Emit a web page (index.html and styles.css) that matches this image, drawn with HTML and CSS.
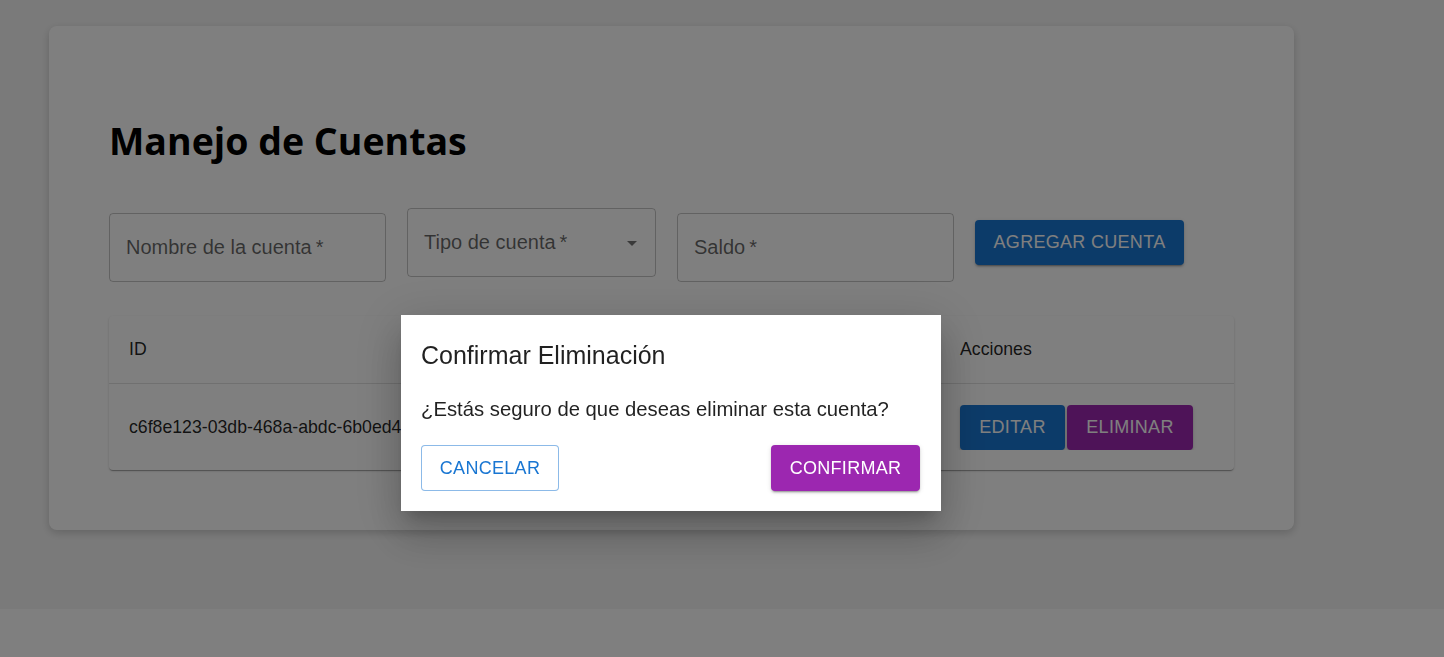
FILE: index.html
```html
<!DOCTYPE html>
<html lang="es">
<head>
<meta charset="utf-8">
<title>Manejo de Cuentas</title>
<link rel="stylesheet" href="styles.css">
</head>
<body>
<div class="app">
  <div class="card">
    <h1 class="title">Manejo de Cuentas</h1>
    <div class="form-row">
      <div class="field field-text"><span class="label">Nombre de la cuenta&thinsp;*</span></div>
      <div class="field field-select"><span class="label">Tipo de cuenta&thinsp;*</span><span class="arrow"></span></div>
      <div class="field field-text"><span class="label">Saldo&thinsp;*</span></div>
      <button class="btn btn-blue btn-add">AGREGAR CUENTA</button>
    </div>
    <div class="table-paper">
      <div class="trow thead">
        <div class="cell c-id">ID</div>
        <div class="cell c-name"></div>
        <div class="cell c-type"></div>
        <div class="cell c-bal"></div>
        <div class="cell c-act">Acciones</div>
      </div>
      <div class="trow tbody">
        <div class="cell c-id">c6f8e123-03db-468a-abdc-6b0ed4</div>
        <div class="cell c-name"></div>
        <div class="cell c-type"></div>
        <div class="cell c-bal"></div>
        <div class="cell c-act">
          <button class="btn btn-blue btn-edit">EDITAR</button>
          <button class="btn btn-purple btn-del">ELIMINAR</button>
        </div>
      </div>
    </div>
  </div>
</div>
<div class="backdrop"></div>
<div class="dialog" role="dialog">
  <h2 class="dialog-title">Confirmar Eliminación</h2>
  <p class="dialog-text">¿Estás seguro de que deseas eliminar esta cuenta?</p>
  <div class="dialog-actions">
    <button class="btn btn-outline">CANCELAR</button>
    <button class="btn btn-purple btn-confirm">CONFIRMAR</button>
  </div>
</div>
</body>
</html>
```
FILE: styles.css
```css
* { box-sizing: border-box; }
html, body { margin: 0; padding: 0; background: #ffffff; }
body { font-family: "Liberation Sans", Arial, sans-serif; color: rgba(0,0,0,0.87); }

.app {
  background: #f5f5f5;
  height: 609px;
  padding: 26px 150px 0 49px;
}
.card {
  background: #ffffff;
  border-radius: 8px;
  box-shadow: 0 3px 8px rgba(0,0,0,0.18);
  height: 504px;
  padding: 93px 60px 0 60px;
}
.title {
  margin: 0;
  font-family: "Open Sans", "Noto Sans", sans-serif;
  font-weight: 700;
  font-size: 37.5px;
  line-height: 44px;
  color: #000;
}
.form-row {
  display: flex;
  align-items: flex-start;
  gap: 21px;
  margin-top: 45px;
}
.field {
  position: relative;
  height: 69px;
  border: 1px solid rgba(0,0,0,0.23);
  border-radius: 4px;
  display: flex;
  align-items: center;
  padding: 0 16px;
}
.field-text { width: 277px; margin-top: 5px; }
.field-select { width: 249px; }
.label { font-size: 20px; color: rgba(0,0,0,0.6); }
.arrow {
  position: absolute;
  right: 18px;
  top: 32px;
  width: 0; height: 0;
  border-left: 5px solid transparent;
  border-right: 5px solid transparent;
  border-top: 5px solid rgba(0,0,0,0.54);
}
.btn {
  font-family: "Liberation Sans", Arial, sans-serif;
  font-weight: 500;
  font-size: 18px;
  border: 0;
  border-radius: 4px;
  height: 45px;
  padding: 0;
  cursor: pointer;
  letter-spacing: 0.3px;
}
.btn-blue { background: #1976d2; color: #fff; box-shadow: 0 3px 1px -2px rgba(0,0,0,.2), 0 2px 2px 0 rgba(0,0,0,.14), 0 1px 5px 0 rgba(0,0,0,.12); }
.btn-purple { background: #9c27b0; color: #fff; box-shadow: 0 3px 1px -2px rgba(0,0,0,.2), 0 2px 2px 0 rgba(0,0,0,.14), 0 1px 5px 0 rgba(0,0,0,.12); }
.btn-add { width: 209px; margin-top: 12px; }

.table-paper {
  margin-top: 34px;
  background: #fff;
  border-radius: 4px;
  box-shadow: 0 2px 1px -1px rgba(0,0,0,.2), 0 1px 1px 0 rgba(0,0,0,.14), 0 1px 3px 0 rgba(0,0,0,.12);
  overflow: hidden;
}
.trow { display: flex; align-items: center; }
.thead { height: 68px; border-bottom: 1px solid #e0e0e0; }
.tbody { height: 86px; }
.cell { padding: 0 20px; font-size: 17.7px; white-space: nowrap; overflow: hidden; }
.c-id { width: 390px; }
.c-name { width: 150px; }
.c-type { width: 140px; }
.c-bal { width: 151px; }
.c-act { flex: 1; display: flex; gap: 2px; }
.btn-edit { width: 105px; }
.btn-del { width: 126px; }

.backdrop {
  position: fixed;
  inset: 0;
  background: rgba(0,0,0,0.5);
}
.dialog {
  position: fixed;
  left: 401px;
  top: 315px;
  width: 540px;
  height: 196px;
  background: #fff;
  box-shadow: 0 11px 15px -7px rgba(0,0,0,.2), 0 24px 38px 3px rgba(0,0,0,.14), 0 9px 46px 8px rgba(0,0,0,.12);
  padding: 25px 21px 20px 20px;
  display: flex;
  flex-direction: column;
}
.dialog-title {
  margin: 0;
  font-size: 25px;
  font-weight: 400;
  line-height: 30px;
  color: rgba(0,0,0,0.87);
}
.dialog-text {
  margin: 25px 0 0 0;
  font-size: 20.3px;
  line-height: 28px;
  color: rgba(0,0,0,0.87);
}
.dialog-actions {
  margin-top: auto;
  display: flex;
  justify-content: space-between;
}
.btn-outline {
  background: #fff;
  color: #1976d2;
  border: 1px solid rgba(25,118,210,0.5);
  width: 138px;
  height: 46px;
}
.btn-confirm { width: 149px; height: 46px; }
```
